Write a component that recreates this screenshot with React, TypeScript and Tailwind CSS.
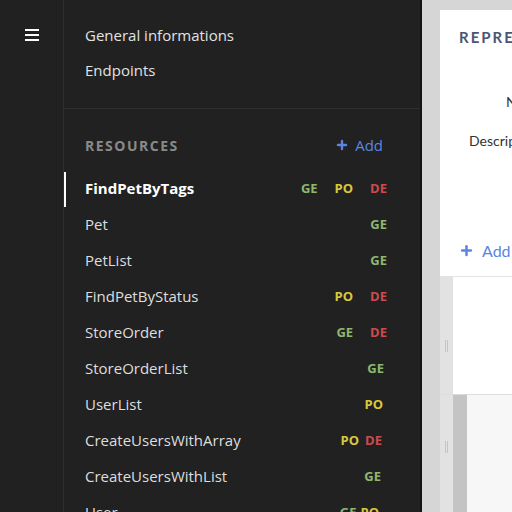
import { Plus } from 'lucide-react'

type Method = 'GE' | 'PO' | 'DE'

type Resource = {
  name: string
  methods: Method[]
  pr: string
  gap: string
  active?: boolean
}

const resources: Resource[] = [
  { name: 'FindPetByTags', methods: ['GE', 'PO', 'DE'], pr: 'pr-[33px]', gap: 'gap-[17px]', active: true },
  { name: 'Pet', methods: ['GE'], pr: 'pr-[33px]', gap: 'gap-[17px]' },
  { name: 'PetList', methods: ['GE'], pr: 'pr-[33px]', gap: 'gap-[17px]' },
  { name: 'FindPetByStatus', methods: ['PO', 'DE'], pr: 'pr-[33px]', gap: 'gap-[17px]' },
  { name: 'StoreOrder', methods: ['GE', 'DE'], pr: 'pr-[33px]', gap: 'gap-[17px]' },
  { name: 'StoreOrderList', methods: ['GE'], pr: 'pr-[36px]', gap: 'gap-[17px]' },
  { name: 'UserList', methods: ['PO'], pr: 'pr-[37px]', gap: 'gap-[17px]' },
  { name: 'CreateUsersWithArray', methods: ['PO', 'DE'], pr: 'pr-[38px]', gap: 'gap-[6px]' },
  { name: 'CreateUsersWithList', methods: ['GE'], pr: 'pr-[39px]', gap: 'gap-[6px]' },
  { name: 'User', methods: ['GE', 'PO'], pr: 'pr-[41px]', gap: 'gap-[4px]' },
]

const methodColor: Record<Method, string> = {
  GE: 'text-[#8db86f]',
  PO: 'text-[#d7c93e]',
  DE: 'text-[#cc4b4f]',
}

function ResourceRow({ r }: { r: Resource }) {
  return (
    <div className="relative flex h-[36px] shrink-0 items-center pl-[21px]">
      {r.active && <div className="absolute left-[-2px] top-[1px] h-[35px] w-[4px] bg-white" />}
      <span className={`flex-1 text-[15px] ${r.active ? 'font-bold text-white' : 'text-[#dedede]'}`}>
        {r.name}
      </span>
      <div className={`flex ${r.gap} ${r.pr} text-[13px] font-bold`}>
        {r.methods.map((m) => (
          <span key={m} className={methodColor[m]}>{m}</span>
        ))}
      </div>
    </div>
  )
}

export default function App() {
  return (
    <div className="flex h-[512px] w-[512px] overflow-hidden bg-[#d6d6d6] font-['Open_Sans',sans-serif]">
      {/* rail */}
      <div className="flex w-[64px] shrink-0 justify-center border-r border-[#2e2e2e] bg-[#212121] pt-[29px]">
        <div className="flex flex-col gap-[3px]">
          <span className="h-[2px] w-[14px] bg-white" />
          <span className="h-[2px] w-[14px] bg-white" />
          <span className="h-[2px] w-[14px] bg-white" />
        </div>
      </div>

      {/* sidebar */}
      <div className="flex w-[358px] shrink-0 flex-col overflow-hidden border-r-2 border-[#151515] bg-[#212121]">
        <div className="flex h-[109px] shrink-0 flex-col gap-[12px] border-b border-[#2e2e2e] pl-[21px] pt-[24px] text-[15px] text-[#e2e2e2]">
          <span>General informations</span>
          <span>Endpoints</span>
        </div>
        <div className="flex shrink-0 items-center justify-between pl-[21px] pr-[37px] pt-[25px] pb-[14px]">
          <span className="text-[14px] font-bold tracking-[1.5px] text-[#8a8a8a]">RESOURCES</span>
          <span className="flex items-center gap-[6px] text-[15px] text-[#5b86e0]">
            <Plus size={14} strokeWidth={4} />
            Add
          </span>
        </div>
        <div className="flex shrink-0 flex-col">
          {resources.map((r) => (
            <ResourceRow key={r.name} r={r} />
          ))}
        </div>
      </div>

      {/* main */}
      <div className="flex flex-1 flex-col pl-[18px] pt-[10px]">
        <div className="flex h-[267px] shrink-0 flex-col border-b border-[#e4e4e4] bg-white pl-[19px] pt-[16px] font-['Lato',sans-serif]">
          <span className="whitespace-nowrap text-[15px] font-bold tracking-[2px] text-[#4b5570]">REPRESENTATION</span>
          <span className="mt-[42px] whitespace-nowrap pl-[47px] text-[14px] text-[#333]">Name</span>
          <span className="mt-[18px] whitespace-nowrap pl-[10px] text-[14px] text-[#333]">Description</span>
          <span className="mt-[88px] flex items-center gap-[8px] whitespace-nowrap text-[16px] text-[#5b86e0]">
            <Plus size={15} strokeWidth={4} />
            Add
          </span>
        </div>
        <div className="flex h-[118px] shrink-0 border-b border-[#dcdcdc]">
          <div className="flex w-[13px] items-center justify-center bg-[#e2e2e2] pt-[20px]">
            <span className="h-[12px] w-[3px] border-x border-[#c4c4c4]" />
          </div>
          <div className="flex flex-1 items-center justify-end bg-white pt-[4px]">
            <span className="mr-[-4px] text-[14px] font-bold text-black">\</span>
          </div>
        </div>
        <div className="flex flex-1">
          <div className="flex w-[13px] justify-center bg-[#e2e2e2] pt-[46px]">
            <span className="h-[12px] w-[3px] border-x border-[#c4c4c4]" />
          </div>
          <div className="w-[14px] bg-[#c4c4c4]" />
          <div className="flex-1 bg-[#f7f7f7]" />
        </div>
      </div>
    </div>
  )
}
